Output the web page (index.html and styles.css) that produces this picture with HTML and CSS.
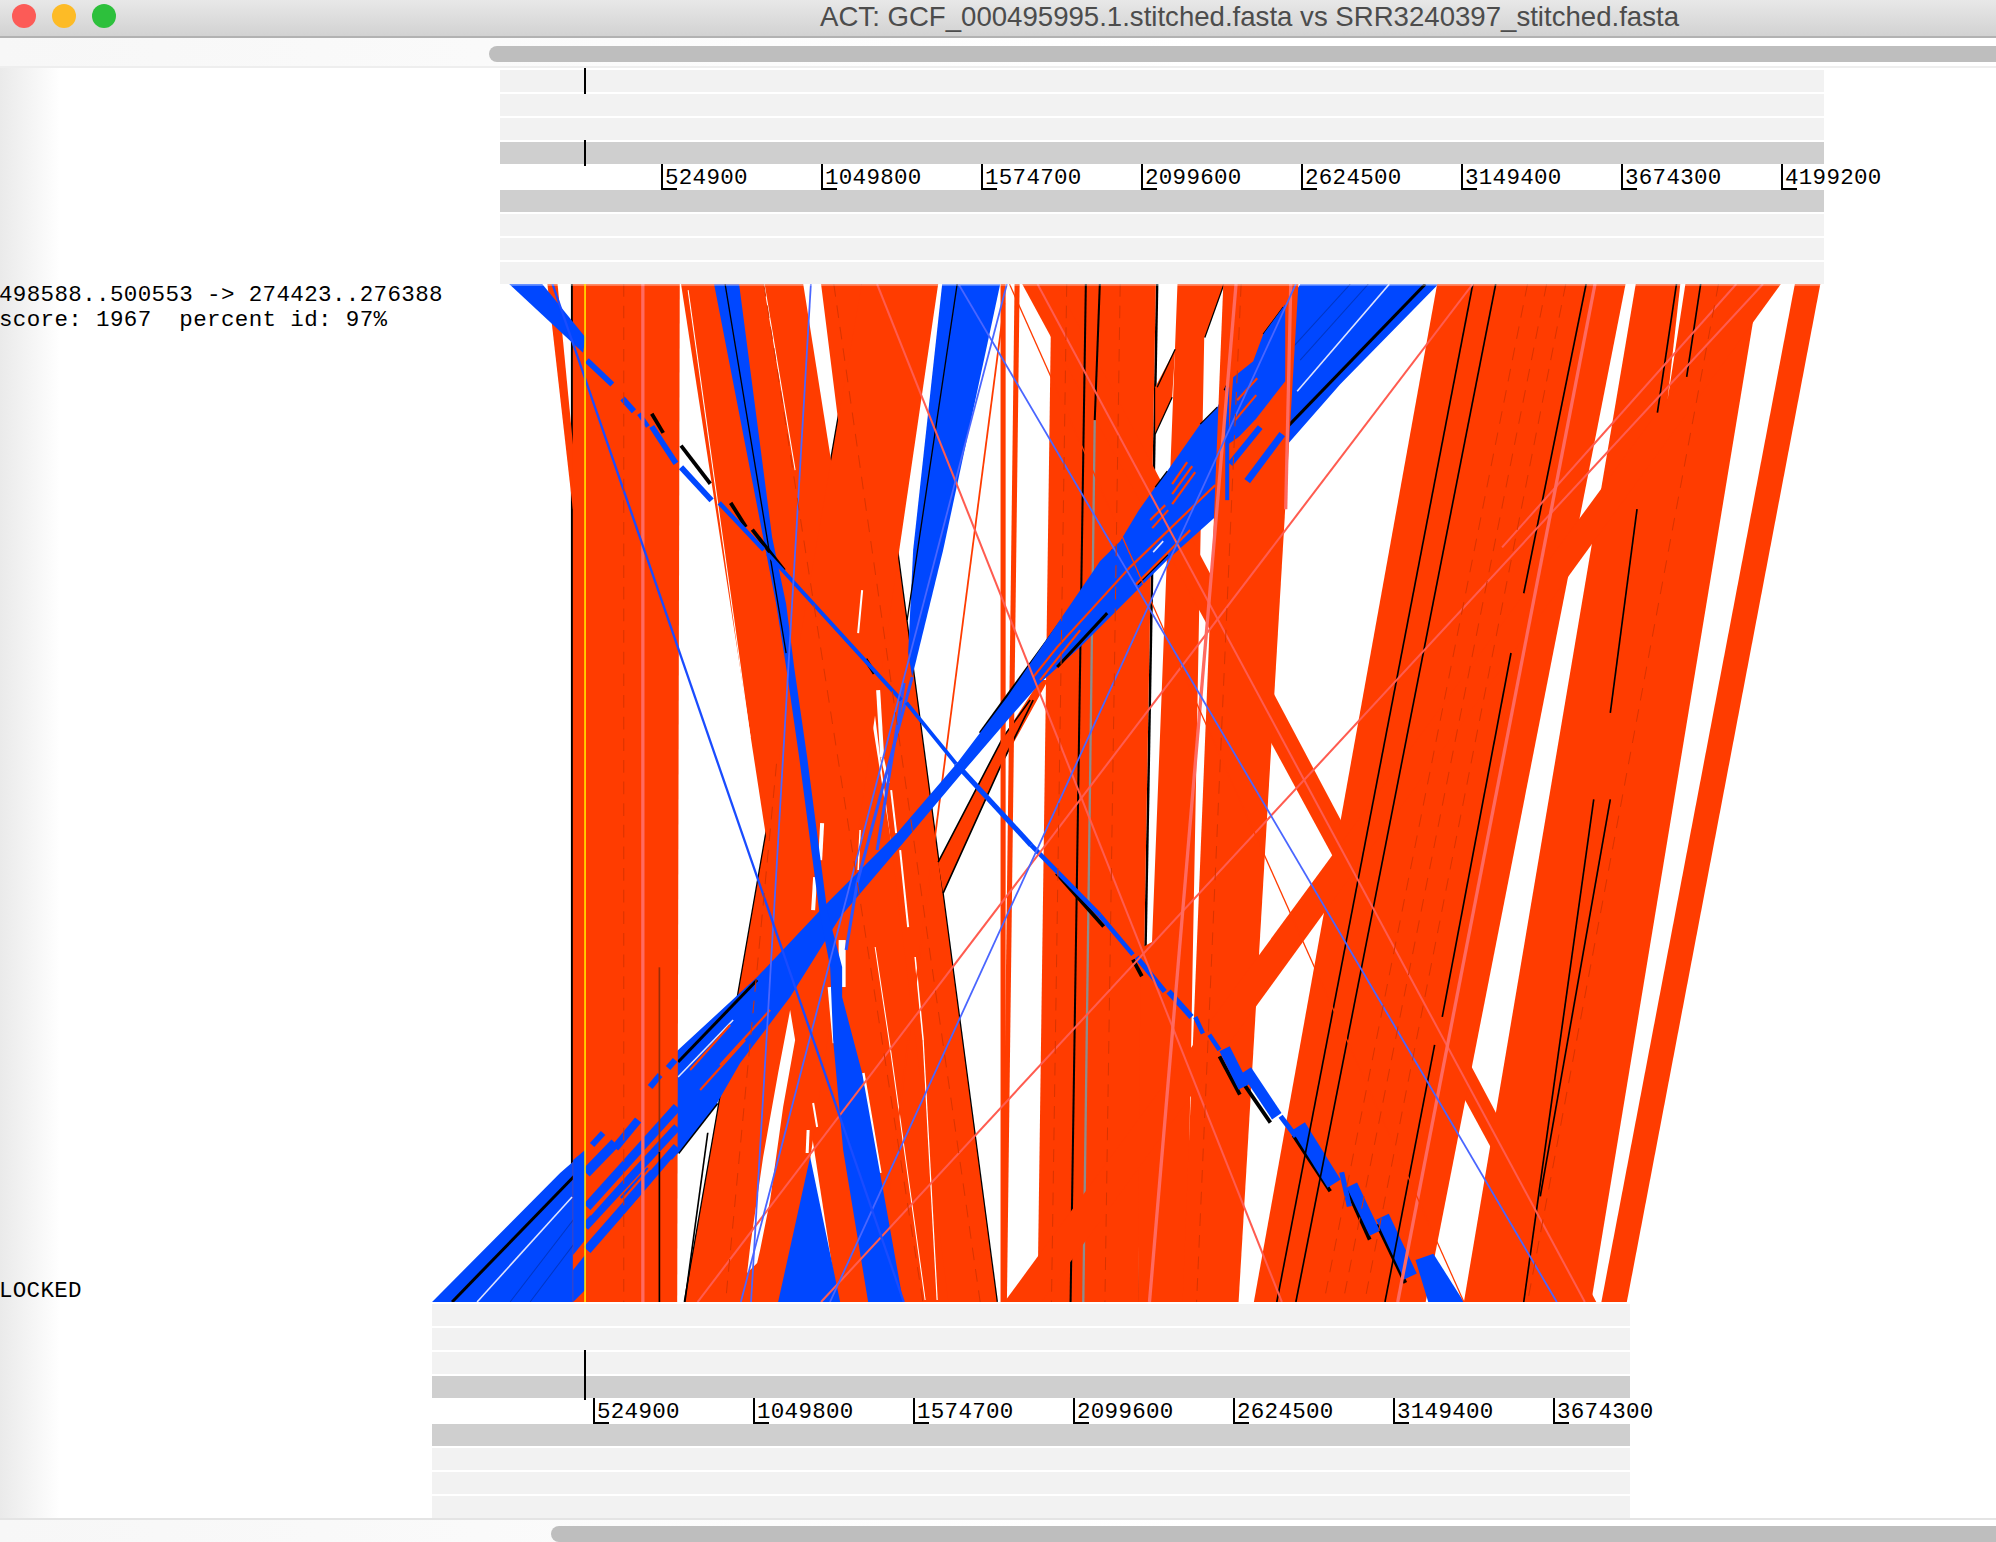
FILE: index.html
```html
<!DOCTYPE html>
<html lang="en">
  <head>
    <meta charset="UTF-8" />
    <title>ACT</title>
    <link rel="stylesheet" href="styles.css">
  </head>
  <body>
    <div class="titlebar">
      <div class="light light-close"></div>
      <div class="light light-min"></div>
      <div class="light light-max"></div>
      <div class="title">ACT: GCF_000495995.1.stitched.fasta vs SRR3240397_stitched.fasta</div>
    </div>
    <div class="scroll scroll-top"><div class="thumb"></div></div>

    <div class="main">
      <div class="info">498588..500553 -&gt; 274423..276388<br>score: 1967  percent id: 97%</div>
      <div class="locked">LOCKED</div>

      <div class="tracks tracks-top">
        <div class="cursor cursor-a"></div>
        <div class="cursor cursor-b"></div>
        <div class="row"></div>
        <div class="row"></div>
        <div class="row"></div>
        <div class="row row-dark"></div>
        <div class="ruler">
          <div class="tick">524900</div>
          <div class="tick">1049800</div>
          <div class="tick">1574700</div>
          <div class="tick">2099600</div>
          <div class="tick">2624500</div>
          <div class="tick">3149400</div>
          <div class="tick">3674300</div>
          <div class="tick">4199200</div>
        </div>
        <div class="row row-dark"></div>
        <div class="row"></div>
        <div class="row"></div>
        <div class="row"></div>
      </div>

      <!-- ribbons are written as top x -> bottom x; the group scaled by .7857 uses page pixels -->
      <svg class="matches" viewBox="0 223 1568 800" preserveAspectRatio="none">
        <g class="edge">
          <line x1="449.5" y1="223" x2="449.5" y2="1023"/>
          <line x1="677" y1="223" x2="538" y2="1023"/>
          <line x1="677" y1="223" x2="783" y2="1023"/>
          <line x1="909" y1="223" x2="895" y2="1023"/>
          <line x1="961" y1="223" x2="946" y2="265"/>
        </g>
        <g class="red">
          <polygon points="535,223 631,223 757,1023 658,1023"/>
          <polygon points="645,223 677,223 783,1023 745,1023"/>
          <polygon points="677,223 737,223 620,1023 538,1023"/>
          <polygon points="826,223 908,223 894,1023 815,1023"/>
          <polygon points="430,223 438,223 455,400 450,400"/>
          <polygon points="925,223 961,223 946,265 932,1023 894,1023 896,745 905,740"/>
          <polygon points="803,223 830,223 1254,1023 1237,1023"/>
        </g>

        <g transform="scale(.7857)">
          <g class="gap">
            <polygon points="790,1010 795,1040 783,1107 770,1200 760,1250 757,1263 747,1273 750,1247 763,1157 778,1073"/>
          </g>
          <g class="sliver">
            <line x1="862" y1="590" x2="858" y2="633" stroke-width="2"/>
            <line x1="878" y1="690" x2="882" y2="757" stroke-width="4"/>
            <line x1="882" y1="757" x2="888" y2="783" stroke-width="3"/>
            <line x1="891" y1="790" x2="896" y2="833" stroke-width="2"/>
            <line x1="822" y1="823" x2="820" y2="860" stroke-width="4"/>
            <line x1="815" y1="877" x2="813" y2="910" stroke-width="4"/>
            <line x1="900" y1="850" x2="908" y2="927" stroke-width="2"/>
            <line x1="860" y1="830" x2="858" y2="870" stroke-width="1.5"/>
            <line x1="813" y1="1103" x2="817" y2="1127" stroke-width="2"/>
            <line x1="808" y1="1130" x2="807" y2="1153" stroke-width="3"/>
            <line x1="830" y1="987" x2="835" y2="1043" stroke-width="5"/>
            <line x1="842" y1="940" x2="842" y2="987" stroke-width="7"/>
            <line x1="863" y1="1073" x2="880" y2="1173" stroke-width="3"/>
            <line x1="875" y1="947" x2="890" y2="1047" stroke-width="1"/>
            <line x1="890" y1="1047" x2="925" y2="1300" stroke-width="1"/>
            <line x1="915" y1="957" x2="923" y2="1040" stroke-width="1.5"/>
            <line x1="923" y1="1040" x2="937" y2="1300" stroke-width="1.2"/>
            <line x1="688" y1="290" x2="750" y2="737" stroke-width="1"/>
            <line x1="764" y1="284" x2="795" y2="470" stroke-width="1"/>
            <line x1="1320" y1="360" x2="1307" y2="440" stroke-width="1.5"/>
          </g>
          <!-- short ribbon going up to the right behind the inversion -->
          <polygon class="red" points="938,862 1003,737 1040,680 1048,680 1000,767 943,893"/>
          <g class="mark-thin">
            <polyline points="938,862 1003,737 1030,700"/>
            <polyline points="943,893 1000,767 1033,700"/>
          </g>
        </g>

        <line class="red-thick" x1="788" y1="223" x2="788" y2="1023"/>
        <line class="red-thick" x1="799" y1="223" x2="789" y2="1023"/>
        <line class="red-thin" x1="789" y1="238" x2="687" y2="1023"/>
        <line class="mark" x1="853" y1="223" x2="841" y2="1023"/>
        <line class="mark" x1="864" y1="223" x2="860" y2="330"/>
        <line class="mark-grey" x1="860" y1="330" x2="851" y2="1023"/>

        <!-- the big inversion -->
        <g transform="scale(.7857)">
          <line class="mark-wide" x1="1113" y1="550" x2="980" y2="733"/>
          <line class="mark-wide" x1="717" y1="1103" x2="678" y2="1153"/>
          <line class="mark-wide" x1="660" y1="1183" x2="648" y2="1197"/>
          <polygon class="blue" points="1300,284 1438,284 1340,384 1290,441 1245,490 1167,560 1080,647 1040,683 1010,717 967,767 903,843 840,917 790,997 740,1063 717,1103 678,1153 648,1197 590,1267 574,1302 432,1302 560,1173 583,1153 678,1050 757,977 827,903 897,833 957,763 1007,697 1100,561 1120,541 1138,511 1155,487 1167,471 1200,424 1217,407 1233,377 1250,367 1263,334 1285,307"/>
          <g class="mark-wide">
            <line x1="1425" y1="284" x2="1283" y2="431"/>
            <line x1="1167" y1="554" x2="1137" y2="584"/>
            <line x1="1107" y1="613" x2="1057" y2="667"/>
            <line x1="757" y1="980" x2="678" y2="1062"/>
            <line x1="583" y1="1167" x2="452" y2="1302"/>
          </g>
          <g class="pale">
            <line x1="1389" y1="284" x2="1297" y2="391"/>
            <line x1="1163" y1="541" x2="1153" y2="552"/>
            <line x1="733" y1="1020" x2="678" y2="1077"/>
            <line x1="572" y1="1197" x2="477" y2="1302"/>
          </g>
          <g class="blue-dark">
            <line x1="1350" y1="284" x2="1290" y2="350"/>
            <line x1="1368" y1="284" x2="1300" y2="360"/>
            <line x1="650" y1="1120" x2="510" y2="1302"/>
            <line x1="660" y1="1130" x2="530" y2="1302"/>
          </g>
        </g>

        <!-- ribbons on top of it -->
        <g class="red">
          <polygon points="450,223 534,223 532,1023 450,1023"/>
          <polygon points="961,223 1020,223 973,1023 929,1023"/>
          <polygon points="1129,223 1277,223 1120,1023 985,1023"/>
          <polygon points="1285,223 1382,223 1250,1023 1150,1023"/>
          <polygon points="1376,223 1399,223 818,1023 789,1023"/>
          <polygon points="1410,223 1430,223 1278,1023 1258,1023"/>
        </g>
        <g class="gap">
          <polygon points="1320,223 1324,223 1310,314"/>
        </g>

        <g transform="scale(.7857)">
          <!-- link between the two columns -->
          <polygon class="red" points="1155,387 1175,349 1172,397 1155,434"/>
          <g class="mark-thin">
            <line x1="1175" y1="349" x2="1157" y2="387"/>
            <line x1="1172" y1="397" x2="1155" y2="434"/>
            <line x1="1283" y1="307" x2="1263" y2="334"/>
            <line x1="1217" y1="407" x2="1200" y2="424"/>
            <line x1="1167" y1="471" x2="1155" y2="487"/>
            <line x1="1227" y1="384" x2="1224" y2="390"/>
          </g>

          <!-- fragments of the inversion on the columns -->
          <polygon class="blue" points="1285,304 1263,334 1253,361 1233,377 1228,444 1247,431 1257,417 1285,381"/>
          <g class="frag">
            <line x1="1282" y1="434" x2="1247" y2="481" stroke-width="7"/>
            <line x1="1260" y1="427" x2="1230" y2="464" stroke-width="6"/>
            <line x1="1227" y1="387" x2="1227" y2="500" stroke-width="4"/>
            <line x1="592" y1="1145" x2="603" y2="1133" stroke-width="6"/>
            <line x1="586" y1="1173" x2="615" y2="1143" stroke-width="10"/>
            <line x1="615" y1="1148" x2="638" y2="1120" stroke-width="8"/>
            <line x1="650" y1="1087" x2="660" y2="1075" stroke-width="6"/>
            <line x1="668" y1="1068" x2="675" y2="1060" stroke-width="6"/>
            <line x1="587" y1="1207" x2="677" y2="1107" stroke-width="9"/>
            <line x1="585" y1="1227" x2="677" y2="1127" stroke-width="8"/>
            <line x1="587" y1="1250" x2="677" y2="1147" stroke-width="9"/>
            <line x1="623" y1="1200" x2="650" y2="1170" stroke-width="8"/>
            <line x1="603" y1="1230" x2="623" y2="1207" stroke-width="5"/>
          </g>
          <polygon class="blue" points="573,1160 585,1150 585,1240 573,1255"/>
          <polygon class="blue" points="573,1270 585,1255 585,1290 573,1302"/>
          <g class="hatch">
            <line x1="1237" y1="400" x2="1257" y2="378"/>
            <line x1="1235" y1="420" x2="1256" y2="395"/>
            <line x1="1237" y1="440" x2="1256" y2="420"/>
            <line x1="1172" y1="484" x2="1187" y2="462"/>
            <line x1="1172" y1="494" x2="1192" y2="466"/>
            <line x1="1172" y1="504" x2="1195" y2="472"/>
            <line x1="1150" y1="520" x2="1165" y2="505"/>
            <line x1="1152" y1="528" x2="1168" y2="510"/>
            <polyline points="1215,485 1130,567 1057,647 1033,677"/>
            <line x1="1080" y1="630" x2="1040" y2="680"/>
            <line x1="1190" y1="530" x2="1135" y2="585"/>
            <line x1="600" y1="1175" x2="660" y2="1110"/>
            <line x1="590" y1="1215" x2="670" y2="1125"/>
            <line x1="600" y1="1225" x2="675" y2="1140"/>
            <line x1="600" y1="1245" x2="672" y2="1160"/>
            <line x1="730" y1="1025" x2="690" y2="1070"/>
            <line x1="745" y1="1040" x2="700" y2="1090"/>
            <line x1="770" y1="1010" x2="720" y2="1065"/>
          </g>
        </g>

        <!-- the narrow inversions -->
        <g transform="scale(.7857)">
          <polygon class="blue" points="714,284 739,284 772,537 786,604 794,667 807,757 827,910 842,967 842,997 862,1073 903,1302 868,1302 843,1150 833,1040 830,967 819,910 799,757 786,667 776,604 763,537"/>
          <polygon class="blue" points="942,284 1000,284 943,550 912,677 908,653 913,550"/>
          <polygon class="blue" points="810,1157 840,1302 778,1302"/>
          <line class="mark-thin" x1="725" y1="284" x2="786" y2="653"/>
          <line class="mark-thin" x1="957" y1="284" x2="907" y2="620"/>
          <line class="line-bright" x1="912" y1="677" x2="857" y2="883"/>
          <line class="line-bright" x1="857" y1="883" x2="846" y2="950"/>
          <line class="line-bright" x1="904" y1="683" x2="877" y2="850"/>
        </g>

        <!-- the narrow band running from top left to bottom right -->
        <g class="mark-shadow">
          <line x1="512" y1="325" x2="521" y2="340"/>
          <line x1="535" y1="350" x2="558" y2="380"/>
          <line x1="574" y1="395" x2="586" y2="414"/>
          <line x1="591" y1="416" x2="616" y2="448"/>
          <line x1="680" y1="518" x2="687" y2="529"/>
          <line x1="830" y1="686" x2="867" y2="728"/>
          <line x1="890" y1="754" x2="897" y2="767"/>
          <line x1="958" y1="830" x2="974" y2="860"/>
          <line x1="976" y1="850" x2="998" y2="882"/>
          <line x1="1016" y1="892" x2="1045" y2="936"/>
          <line x1="1058" y1="934" x2="1076" y2="974"/>
          <line x1="1082" y1="962" x2="1104" y2="1008"/>
        </g>
        <polygon class="blue" points="400,223 426,223 460,265 458,277"/>
        <g class="frag">
          <line x1="461" y1="283" x2="481" y2="302" stroke-width="4.5"/>
          <line x1="489" y1="313" x2="498" y2="323" stroke-width="4.5"/>
          <line x1="502" y1="325" x2="509" y2="335" stroke-width="3.5"/>
          <line x1="512" y1="335" x2="531" y2="364" stroke-width="4.5"/>
          <line x1="535" y1="367" x2="559" y2="393" stroke-width="4.5"/>
          <line x1="565" y1="395" x2="600" y2="432" stroke-width="3.5"/>
          <line x1="603" y1="435" x2="708" y2="550" stroke-width="3"/>
          <line x1="712" y1="552" x2="751" y2="600" stroke-width="3"/>
          <line x1="751" y1="600" x2="810" y2="664" stroke-width="4"/>
          <line x1="810" y1="664" x2="864" y2="719" stroke-width="3.6"/>
          <line x1="864" y1="719" x2="890" y2="750" stroke-width="3.6"/>
          <line x1="893" y1="752" x2="915" y2="779" stroke-width="4"/>
          <line x1="918" y1="779" x2="936" y2="799" stroke-width="4.5"/>
          <line x1="939" y1="799" x2="945" y2="812" stroke-width="3.5"/>
          <line x1="950" y1="813" x2="958" y2="825" stroke-width="3.5"/>
          <line x1="962" y1="824" x2="977" y2="854" stroke-width="9"/>
          <line x1="979" y1="841" x2="1003" y2="877" stroke-width="9"/>
          <line x1="1006" y1="877" x2="1018" y2="893" stroke-width="4"/>
          <line x1="1020" y1="885" x2="1048" y2="930" stroke-width="12"/>
          <line x1="1054" y1="921" x2="1060" y2="948" stroke-width="4"/>
          <line x1="1062" y1="931" x2="1080" y2="969" stroke-width="9"/>
          <line x1="1086" y1="956" x2="1108" y2="1003" stroke-width="11"/>
        </g>
        <polygon class="blue" points="1112,990 1126,985 1150,1023 1122,1023"/>

        <!-- black match lines -->
        <g class="mark-thin">
          <line x1="1157" y1="223" x2="1003" y2="1023"/>
          <line x1="1175" y1="223" x2="1018" y2="1023"/>
          <line x1="1246" y1="223" x2="1197" y2="466"/>
          <line x1="1187" y1="513" x2="1133" y2="799"/>
          <line x1="1127" y1="821" x2="1088" y2="1023"/>
          <line x1="1317" y1="223" x2="1302" y2="324"/>
          <line x1="1336" y1="223" x2="1325" y2="296"/>
          <line x1="1265" y1="628" x2="1210" y2="940"/>
          <line x1="1252" y1="628" x2="1197" y2="1023"/>
          <line x1="1286" y1="400" x2="1265" y2="560"/>
          <line x1="518" y1="905" x2="518" y2="1023"/>
          <line x1="556" y1="890" x2="538" y2="1023"/>
        </g>
        <line class="mark-brown" x1="518" y1="760" x2="518" y2="905"/>

        <!-- single thin matches -->
        <g class="line-red">
          <line x1="689" y1="223" x2="1007" y2="1023"/>
          <line x1="1157" y1="223" x2="548" y2="1023"/>
          <line x1="1385" y1="223" x2="645" y2="1023"/>
          <line x1="1364" y1="223" x2="1180" y2="430"/>
          <line x1="815" y1="223" x2="1245" y2="1023"/>
        </g>
        <g class="line-pink">
          <line x1="1253" y1="223" x2="1098" y2="1023"/>
          <line x1="971" y1="223" x2="903" y2="1023"/>
          <line x1="505" y1="223" x2="505" y2="1023"/>
          <line x1="1014" y1="223" x2="1010" y2="400"/>
        </g>
        <line class="line-thin-red" x1="793" y1="223" x2="1150" y2="1023"/>
        <g class="line-blue">
          <line x1="637" y1="223" x2="590" y2="1023"/>
          <line x1="753" y1="223" x2="1223" y2="1023"/>
          <line x1="1018" y1="223" x2="652" y2="1023"/>
          <line x1="791" y1="223" x2="582" y2="1023"/>
        </g>
        <line class="line-strong-blue" x1="434" y1="223" x2="710" y2="1023"/>

        <!-- dashed gaps in the ribbons -->
        <g class="dashed">
          <line x1="1200" y1="223" x2="1040" y2="1023"/>
          <line x1="1215" y1="223" x2="1055" y2="1023"/>
          <line x1="1230" y1="223" x2="1072" y2="1023"/>
          <line x1="1350" y1="223" x2="1200" y2="1023"/>
          <line x1="600" y1="223" x2="725" y2="1023"/>
          <line x1="655" y1="223" x2="770" y2="1023"/>
          <line x1="838" y1="223" x2="826" y2="1023"/>
          <line x1="880" y1="223" x2="868" y2="1023"/>
          <line x1="610" y1="600" x2="570" y2="1023"/>
          <line x1="490" y1="223" x2="490" y2="1023"/>
          <line x1="975" y1="223" x2="940" y2="1023"/>
        </g>

        <rect class="top-fade" x="400" y="223" width="1030" height="1.4"/>
        <line class="selection" x1="459.6" y1="223" x2="459.6" y2="1023"/>
      </svg>

      <div class="tracks tracks-bottom">
        <div class="cursor cursor-c"></div>
        <div class="row"></div>
        <div class="row"></div>
        <div class="row"></div>
        <div class="row row-dark"></div>
        <div class="ruler">
          <div class="tick">524900</div>
          <div class="tick">1049800</div>
          <div class="tick">1574700</div>
          <div class="tick">2099600</div>
          <div class="tick">2624500</div>
          <div class="tick">3149400</div>
          <div class="tick">3674300</div>
        </div>
        <div class="row row-dark"></div>
        <div class="row"></div>
        <div class="row"></div>
        <div class="row"></div>
      </div>
    </div>

    <div class="scroll scroll-bottom"><div class="thumb"></div></div>
  </body>
</html>
```

FILE: styles.css
```css
html, body {
  margin: 0;
  height: 100%;
}

body {
  width: 1996px;
  height: 1542px;
  overflow: hidden;
  display: flex;
  flex-direction: column;
  background: #fff;
  font-family: "Liberation Mono", monospace;
  font-size: 22.5px;
  letter-spacing: .3px;
  color: #000;
}

.titlebar {
  height: 36px;
  display: flex;
  align-items: center;
  gap: 16px;
  padding-left: 12px;
  background: linear-gradient(#e8e8e8, #d2d2d2);
  border-bottom: 2px solid #b2b2b2;
  font-family: "Liberation Sans", sans-serif;
  letter-spacing: 0;
}

.light {
  width: 24px;
  height: 24px;
  border-radius: 50%;
  margin-top: -4px;
}

.light-close { background: #fc5b57; }
.light-min { background: #fdbb26; }
.light-max { background: #2dc03c; }

.title {
  margin-left: 688px;
  margin-top: -2px;
  font-size: 27.6px;
  white-space: nowrap;
  color: #4c4c4c;
}

.scroll {
  background: linear-gradient(to right, #f7f7f7, #fafafa 480px, #fff 1200px);
}

.scroll-top {
  height: 30px;
  padding-top: 8px;
  box-sizing: border-box;
  border-bottom: 2px solid #eee;
}

.scroll-top .thumb { margin-left: 489px; }

.scroll-bottom {
  height: 24px;
  padding-top: 6px;
  box-sizing: border-box;
  border-top: 2px solid #e4e4e4;
}

.scroll-bottom .thumb { margin-left: 551px; }

.thumb {
  height: 16px;
  background: #bebebe;
  border-radius: 8px 0 0 8px;
}

.main {
  flex: 1;
  position: relative;
  background: linear-gradient(to right, #eaeaea, #fff 60px);
}

.info {
  position: absolute;
  left: -1px;
  top: 215px;
  line-height: 25px;
  letter-spacing: .37px;
  white-space: pre;
}

.locked {
  position: absolute;
  left: -1px;
  top: 1211px;
  line-height: 25px;
  letter-spacing: .3px;
}

.tracks {
  position: relative;
  display: flex;
  flex-direction: column;
}

.tracks-top {
  margin-left: 500px;
  width: 1324px;
  padding-top: 2px;
}

.tracks-bottom {
  margin-left: 432px;
  width: 1198px;
  margin-top: 2px;
}

.row {
  height: 22px;
  margin-bottom: 2px;
  background: #f2f2f2;
}

.row:last-child { margin-bottom: 0; }

.row-dark { background: #cfcfcf; }

.row-dark:has(+ .ruler) { margin-bottom: 0; }

.ruler {
  display: flex;
  height: 26px;
  padding-left: 161px;
  background: #fff;
}

.tick {
  flex: 0 0 160px;
  box-sizing: border-box;
  padding-left: 2px;
  border-left: 2px solid #000;
  background: linear-gradient(#000, #000) no-repeat left bottom / 14px 2px;
  line-height: 28px;
  white-space: nowrap;
}

.cursor {
  position: absolute;
  width: 2px;
  background: #000;
  z-index: 1;
}

.cursor-a { left: 84px; top: 0; height: 26px; }
.cursor-b { left: 84px; top: 72px; height: 26px; }
.cursor-c { left: 152px; top: 46px; height: 50px; }

.matches {
  display: block;
  width: 1996px;
  height: 1018px;
}

.red polygon, polygon.red { fill: #ff3c00; }
.blue polygon, polygon.blue { fill: #0047ff; }
.gap polygon { fill: #fff; }
.sliver line { stroke: #fff; }
.frag line { stroke: #0047ff; }

.edge line {
  stroke: #000;
  stroke-width: 2;
}

.mark { stroke: #000; stroke-width: 1.6; }
.mark-grey { stroke: #8d8d8d; stroke-width: 1.8; }
.mark-brown { stroke: #9a2c08; stroke-width: 1.3; }

.mark-thin line, line.mark-thin {
  stroke: #000;
  stroke-width: 1.3;
}

.mark-thin polyline {
  fill: none;
  stroke: #000;
  stroke-width: 1.6;
}

.mark-wide, .mark-wide line {
  stroke: #000;
  stroke-width: 3;
}

.mark-shadow line {
  stroke: #000;
  stroke-width: 3;
}

.pale line { stroke: #dfe4ff; stroke-width: 1.6; }

.blue-dark line { stroke: #0036c4; stroke-width: 1; }

.hatch line, .hatch polyline {
  fill: none;
  stroke: #ff3c00;
  stroke-width: 2.2;
}

.red-thick { stroke: #ff3c00; stroke-width: 4; }
.red-thin { stroke: #ff3c00; stroke-width: 1.4; }

.line-red line { stroke: #ff5c50; stroke-width: 1.6; }
.line-pink line { stroke: #ff6a60; stroke-width: 2.6; }
.line-thin-red { stroke: #ff3c00; stroke-width: 1; }
.line-blue line { stroke: #4a66ff; stroke-width: 1.4; }
.line-strong-blue { stroke: #1a4cff; stroke-width: 1.8; }
.line-bright { stroke: #2a55ff; stroke-width: 3; }

.dashed line {
  stroke: #d83400;
  stroke-width: .8;
  stroke-dasharray: 10 7;
}

.top-fade { fill: #fff; opacity: .4; }

.selection { stroke: #ffef00; stroke-width: 1.2; }
```
